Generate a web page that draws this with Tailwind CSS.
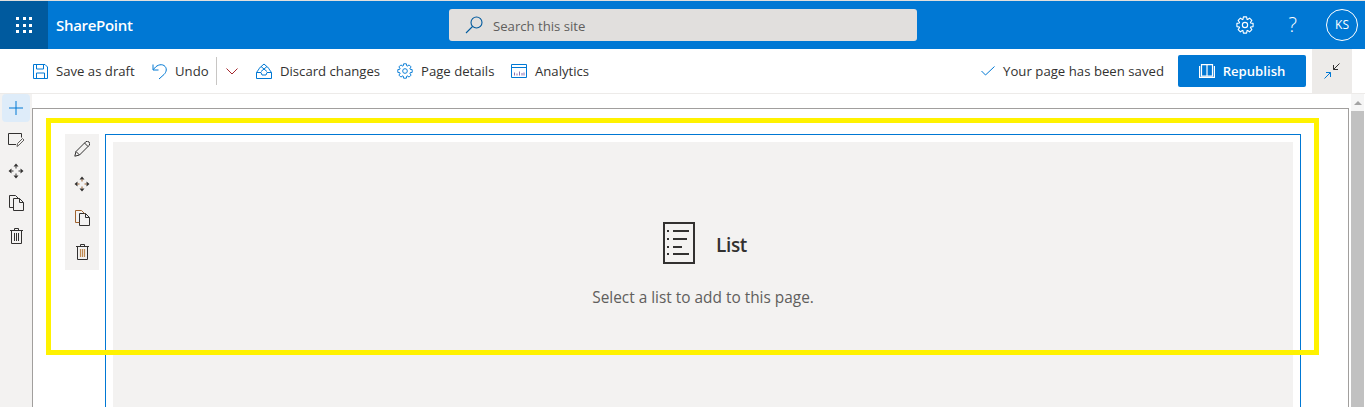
<!DOCTYPE html>
<html lang="en">
<head>
    <meta charset="UTF-8">
    <title>SharePoint</title>
    <script src="https://cdn.jsdelivr.net/npm/@tailwindcss/browser@4"></script>
</head>
<body class="relative w-[1365px] h-[407px] overflow-hidden bg-white flex flex-col font-['Open_Sans',sans-serif] text-[13.15px] text-[#323130]">
    <!-- Suite bar -->
    <div class="h-px shrink-0 bg-[#e1dfdd]"></div>
    <header class="h-12 shrink-0 flex items-center bg-[#0078d4] text-white">
        <div class="w-12 h-12 bg-[#005a9e] grid grid-cols-[3px_3px_3px] gap-[3.5px] place-content-center">
            <span class="w-[3px] h-[3px] bg-white"></span><span class="w-[3px] h-[3px] bg-white"></span><span class="w-[3px] h-[3px] bg-white"></span>
            <span class="w-[3px] h-[3px] bg-white"></span><span class="w-[3px] h-[3px] bg-white"></span><span class="w-[3px] h-[3px] bg-white"></span>
            <span class="w-[3px] h-[3px] bg-white"></span><span class="w-[3px] h-[3px] bg-white"></span><span class="w-[3px] h-[3px] bg-white"></span>
        </div>
        <div class="ml-2 w-[393px] text-[15px] font-semibold tracking-[-0.3px]">SharePoint</div>
        <div class="w-[468px] h-8 rounded-[3px] bg-[#e1dfdd] flex items-center pl-4 text-[#605e5c]">
            <svg class="w-[18px] h-[18px]" viewBox="0 0 18 18" fill="none" stroke="#005a9e" stroke-width="1.1"><circle cx="11.5" cy="6.5" r="5.5"/><path d="M7.5 10.5 1 17"/></svg>
            <span class="ml-[10px] pt-[3px]">Search this site</span>
        </div>
        <div class="ml-auto flex items-center">
            <svg class="w-[18px] h-[18px] mr-[35px]" viewBox="0 0 24 24" fill="none" stroke="white" stroke-width="1.5" stroke-linejoin="round"><circle cx="12" cy="12" r="3.5"/><path d="M9.26 4.48 9.9 1.2h4.2l.64 3.28.64.27 2.77-1.87 2.97 2.97-1.87 2.77.27.64 3.28.64v4.2l-3.28.64-.27.64 1.87 2.77-2.97 2.97-2.77-1.87-.64.27-.64 3.28H9.9l-.64-3.28-.64-.27-2.77 1.87-2.97-2.97 1.87-2.77-.27-.64-3.28-.64V9.900l3.28-.64.27-.64-1.87-2.77 2.97-2.97 2.770 1.870z"/></svg>
            <span class="text-[20px] font-light leading-none mr-[29px]">?</span>
            <div class="w-8 h-8 mr-[7px] rounded-full border border-white flex items-center justify-center text-[12px]">KS</div>
        </div>
    </header>

    <!-- Command bar -->
    <div class="h-[45px] shrink-0 flex items-center border-b border-[#edebe9] pl-[33px]">
        <svg class="w-[15px] h-[15px] text-[#0078d4]" viewBox="0 0 15 15" fill="none" stroke="currentColor"><path d="M.5.5h11.500l2.500 2.500v11.500H.5z"/><path d="M3.500.5v4.500h7V.5M3.500 14.500V9h8v5.500"/></svg>
        <span class="ml-[8px] w-[96px] pt-[2px]">Save as draft</span>
        <svg class="w-4 h-[17px] text-[#0078d4]" viewBox="0 0 16 17" fill="none" stroke="currentColor"><path d="M1 1.500V7h5.500"/><path d="M1.500 6.500C4 2.500 8.500 .5 12 2.500c3.500 2.500 2.500 6.500 0 9L7 16"/></svg>
        <span class="ml-[7px] w-[41px] pt-[2px]">Undo</span>
        <div class="w-px h-7 bg-[#c8c6c4]"></div>
        <svg class="ml-[9px] w-3 h-[7px]" viewBox="0 0 12 7" fill="none" stroke="#a4262c"><path d="M.5.500 6 6l5.500-5.500"/></svg>
        <svg class="ml-[18px] w-4 h-4 text-[#0078d4]" viewBox="0 0 16 16" fill="none" stroke="currentColor"><path d="M.5 9.500 3 6v-.5L8 1l5 4.500V6l2.500 3.500v6H.5z"/><path d="M.5 9.500H5L6 12h4l1-2.500h4.500M5 3.500l6 5M11 3.500l-6 5"/></svg>
        <span class="ml-[8px] w-[117px] pt-[2px]">Discard changes</span>
        <svg class="w-4 h-4 text-[#0078d4]" viewBox="0 0 24 24" fill="none" stroke="currentColor" stroke-width="1.4" stroke-linejoin="round"><circle cx="12" cy="12" r="3.5"/><path d="M9.26 4.48 9.9 1.2h4.2l.64 3.28.64.27 2.77-1.87 2.97 2.97-1.87 2.77.27.64 3.28.64v4.2l-3.28.64-.27.64 1.87 2.77-2.97 2.97-2.77-1.87-.64.27-.64 3.28H9.9l-.64-3.28-.64-.27-2.77 1.87-2.97-2.97 1.87-2.77-.27-.64-3.28-.64V9.900l3.28-.64.27-.64-1.87-2.77 2.97-2.97 2.770 1.870z"/></svg>
        <span class="ml-[8px] w-[90px] pt-[2px]">Page details</span>
        <svg class="w-4 h-[14px] text-[#0078d4]" viewBox="0 0 16 14" fill="none" stroke="currentColor"><path d="M.5.500h15v13H.5zM.5 3.500h15"/><path stroke="#8a6fb0" d="M3.500 11.500v-3M6 11.500v-2M8.500 11.500v-4M11 11.500v-2.500M13 11.500v-3"/></svg>
        <span class="ml-[8px] pt-[2px]">Analytics</span>
        <svg class="ml-auto w-[14px] h-[10px] text-[#0078d4]" viewBox="0 0 14 10" fill="none" stroke="currentColor"><path d="m.5 5 4 4 9-8.500"/></svg>
        <span class="ml-[8px] mr-[14px] pt-[2px] tracking-[0.03px]">Your page has been saved</span>
        <button class="w-[128px] h-8 rounded-[2px] bg-[#0078d4] text-white font-semibold flex items-center justify-center gap-[8px]">
            <svg class="w-4 h-[14px]" viewBox="0 0 16 14" fill="none" stroke="white" stroke-width="1.2"><path d="M2.500.6h5.500v11.500H2.500zM8 .6h5.500v11.500H8"/><path d="M.6 2v11.400h14.800V2"/></svg>
            <span class="pt-[2px]">Republish</span>
        </button>
        <div class="ml-[6px] mr-[13px] w-10 h-[44px] bg-[#edebe9] flex items-center justify-center">
            <svg class="w-4 h-4" viewBox="0 0 16 16" fill="none" stroke-width="1"><path stroke="#0078d4" d="M.5 15.500 6.500 9.500M2 9.500h4.500V14"/><path stroke="#323130" d="M15.500.5 9.500 6.500M9.500 2v4.500H14"/></svg>
        </div>
    </div>

    <!-- Edit canvas -->
    <div class="flex-1 flex min-h-0">
        <aside class="w-8 shrink-0 bg-[#f3f2f1] flex flex-col items-center text-[#323130]">
            <div class="w-7 h-7 rounded-[4px] bg-[#deecf9] flex items-center justify-center">
                <svg class="w-[14px] h-[14px]" viewBox="0 0 14 14" fill="none" stroke="#0078d4"><path d="M7 0v14M0 7h14"/></svg>
            </div>
            <svg class="mt-[10px] w-4 h-4" viewBox="0 0 16 16" fill="none" stroke="currentColor"><path d="M8 12.500H.5v-11h13v4"/><path stroke="#605e5c" d="m9 14.500.5-3 5-5 1.500 1.500-5 5z"/></svg>
            <svg class="mt-[15px] w-4 h-4" viewBox="0 0 16 16" fill="currentColor"><path d="M8 .5 5.500 3.500h5zM8 15.500l-2.500-3h5zM.5 8l3-2.500v5zM15.500 8l-3-2.500v5z"/><path fill="none" stroke="currentColor" d="M8 3.500v2M8 10.500v2M3.500 8h2M10.500 8h2"/></svg>
            <svg class="mt-[16px] w-[15px] h-4" viewBox="0 0 15 16" fill="none" stroke="currentColor"><path d="M4.500 3.500h6l4 4v8h-10zM10.500 3.500v4h4"/><path d="M4.500 12.500h-4V.5h6l3 3"/></svg>
            <svg class="mt-[17px] w-[13px] h-4" viewBox="0 0 13 16" fill="none" stroke="currentColor"><path d="M0 2.500h13M4.500 2.500v-2h4v2M1.500 2.500v13h10v-13M4.500 5v8M6.500 5v8M8.500 5v8"/></svg>
        </aside>
        <main class="flex-1 min-h-0 pt-[14px] bg-white">
            <div class="h-full border-t border-x border-[#a19f9d] pt-[25px] pl-[32px] flex items-stretch">
                <div class="self-start w-[34px] h-[136px] shrink-0 bg-[#f3f2f1] flex flex-col items-center pt-[7px]">
                    <svg class="w-4 h-4" viewBox="0 0 16 16" fill="none" stroke="#323130"><path d="M.8 15.200 2 10.500 11.500 1a1.500 1.500 0 0 1 3.500 3.500L5.500 14z"/><path d="M2 10.500 5.500 14M10.500 2l3.500 3.500"/></svg>
                    <svg class="mt-[19px] w-4 h-4" viewBox="0 0 16 16" fill="#323130"><path d="M8 .5 5.500 3.500h5zM8 15.500l-2.500-3h5zM.5 8l3-2.500v5zM15.500 8l-3-2.500v5z"/><path fill="none" stroke="#a0622d" d="M8 3.500v2M8 10.500v2M3.500 8h2M10.500 8h2"/></svg>
                    <svg class="mt-[18px] w-[15px] h-4" viewBox="0 0 15 16" fill="none" stroke="#323130"><path d="M4.500 3.500h6l4 4v8h-10zM10.500 3.500v4h4"/><path stroke="#a0622d" d="M4.500 12.500h-4V.5h6l3 3"/></svg>
                    <svg class="mt-[18px] w-[13px] h-4" viewBox="0 0 13 16" fill="none" stroke="#323130"><path d="M0 2.500h13M4.500 2.500v-2h4v2M1.500 2.500v13h10v-13"/><path stroke="#c08a50" stroke-width="1.200" d="M4.500 5v8M6.500 5v8M8.500 5v8"/></svg>
                </div>
                <section class="ml-[6px] w-[1196px] shrink-0 border-t border-x border-[#0078d4] px-[7px] pt-[7px]">
                    <div class="h-full bg-[#f3f2f1] pt-[80px] flex flex-col items-center">
                        <div class="ml-[4px] flex items-center">
                            <svg class="w-8 h-[42px]" viewBox="0 0 32 42" fill="none" stroke="#323130"><rect x="1" y="1" width="30" height="40" stroke-width="2"/><path stroke-width="2" d="M10 9h16M10 17h14M10 25h9M10 32h16M5 8v2M5 16v2M5 24v2M5 31v2"/></svg>
                            <h2 class="ml-[21px] pt-[4px] text-[19px] font-semibold tracking-[-0.4px]">List</h2>
                        </div>
                        <p class="mt-[22px] text-[15.4px] text-[#605e5c]">Select a list to add to this page.</p>
                    </div>
                </section>
            </div>
        </main>
        <div class="w-[16px] shrink-0 bg-white pl-[2px] flex flex-col">
            <div class="h-[17px] w-[13px] bg-[#f5f5f5] flex items-center justify-center">
                <span class="w-0 h-0 border-x-[4px] border-x-transparent border-b-[4px] border-b-[#a3a3a3]"></span>
            </div>
            <div class="flex-1 w-[13px] bg-[#c1c1c1]"></div>
        </div>
    </div>

    <!-- Yellow callout drawn over the screenshot -->
    <div class="absolute left-[46px] top-[118px] w-[1273px] h-[237px] border-[5px] border-[#fff200] pointer-events-none"></div>
</body>
</html>
